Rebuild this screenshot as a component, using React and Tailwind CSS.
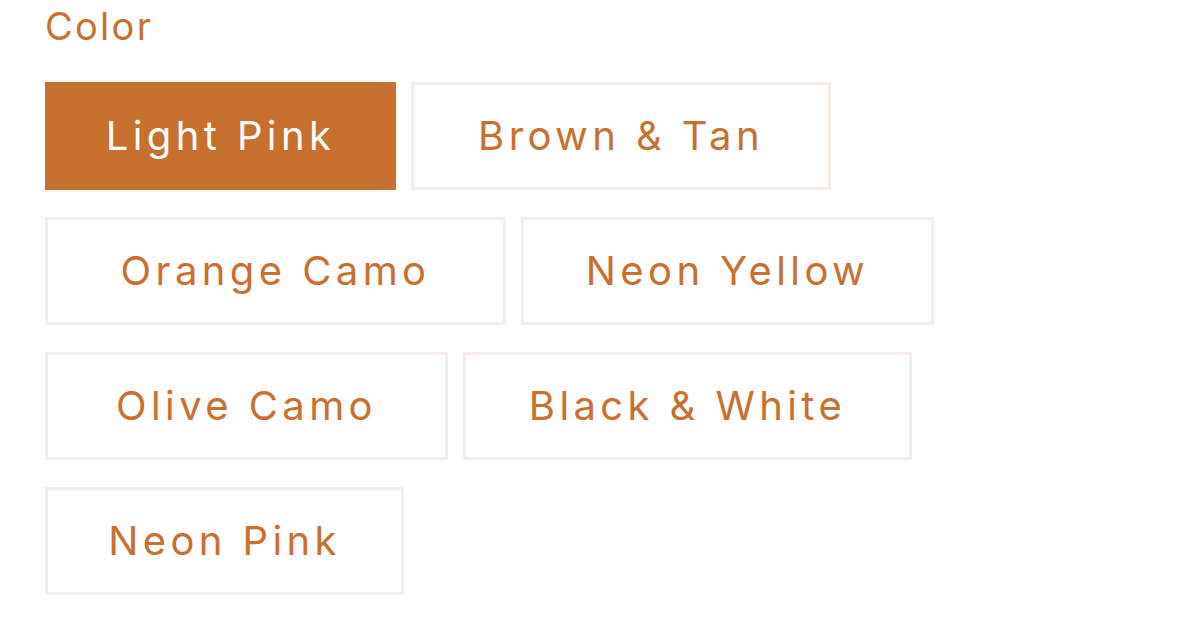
export default function App() {
  const items = [
    { label: "Light Pink", w: "w-[351px]", active: true },
    { label: "Brown & Tan", w: "w-[420px]" },
    { label: "Orange Camo", w: "w-[461px]" },
    { label: "Neon Yellow", w: "w-[413px]" },
    { label: "Olive Camo", w: "w-[403px]" },
    { label: "Black & White", w: "w-[449px]" },
    { label: "Neon Pink", w: "w-[359px]" },
  ];
  const rows = [[0, 1], [2, 3], [4, 5], [6]];
  return (
    <div className="w-[1180px] h-[620px] bg-white pl-[45px] pt-[3px] font-['Inter','Liberation_Sans',sans-serif] text-[#c8702f]">
      <div className="text-[38px] leading-[46px] tracking-[0.06em]">Color</div>
      <div className="mt-[33px] flex flex-col gap-[27px]">
        {rows.map((r, i) => (
          <div key={i} className="flex gap-[15px]">
            {r.map((k) => {
              const it = items[k];
              return (
                <div
                  key={k}
                  className={`${it.w} h-[108px] flex items-center justify-center border-[3px] text-[40px] tracking-[0.11em] ${
                    it.active
                      ? "bg-[#c8702f] border-[#c8702f] text-white"
                      : "bg-white border-[#f8ede6] text-[#c8702f]"
                  }`}
                >
                  {it.label}
                </div>
              );
            })}
          </div>
        ))}
      </div>
    </div>
  );
}
